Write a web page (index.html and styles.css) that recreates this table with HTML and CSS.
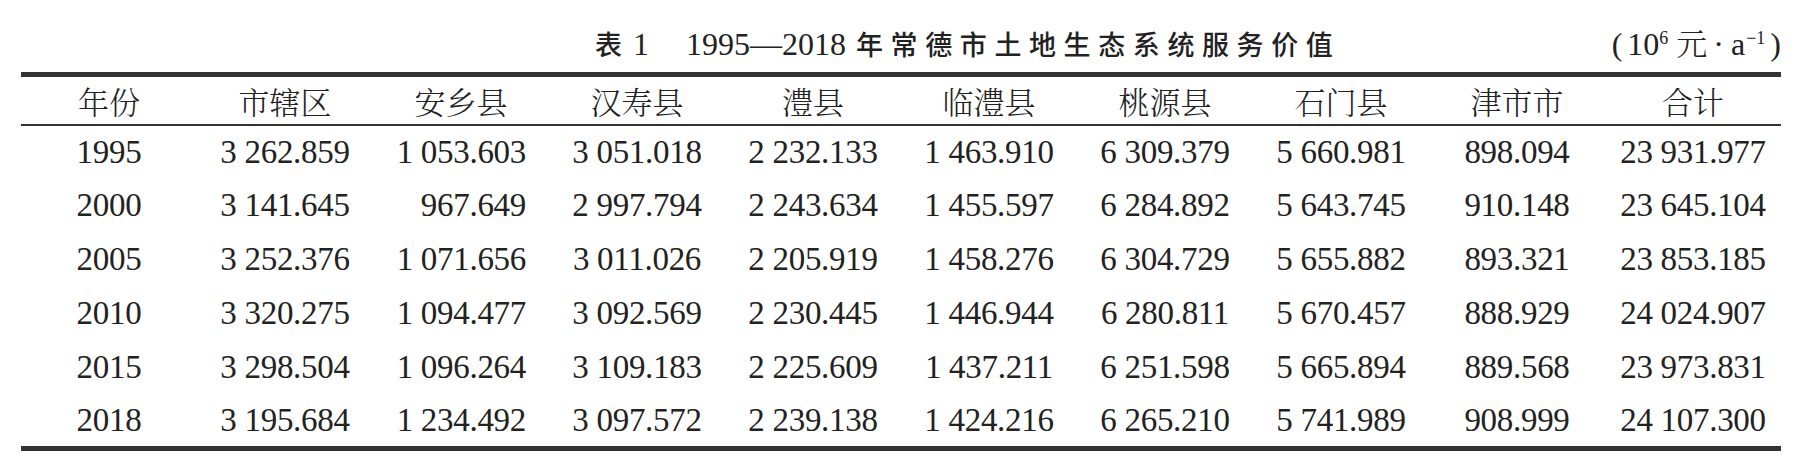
FILE: index.html
```html
<!DOCTYPE html>
<html lang="zh-CN">
<head>
<meta charset="utf-8">
<title>表1 1995—2018年常德市土地生态系统服务价值</title>
<link rel="stylesheet" href="styles.css">
</head>
<body>
<div class="page">
  <div class="caption">
    <div class="title">
      <span class="t-label">表</span><span class="t-num">1</span><span class="t-range">1995—2018</span><span class="t-text">年常德市土地生态系统服务价值</span>
    </div>
    <div class="unit">
      <span class="paren">(</span><span class="u-num">10</span><span class="sup">6</span><span class="u-cjk">元</span><span class="u-dot">·</span><span class="u-a">a</span><span class="sup sup-neg">−1</span><span class="paren paren-r">)</span>
    </div>
  </div>
  <table class="data">
    <colgroup>
      <col class="c"><col class="c"><col class="c"><col class="c"><col class="c">
      <col class="c"><col class="c"><col class="c"><col class="c"><col class="c">
    </colgroup>
    <thead>
      <tr>
        <th>年份</th><th>市辖区</th><th>安乡县</th><th>汉寿县</th><th>澧县</th>
        <th>临澧县</th><th>桃源县</th><th>石门县</th><th>津市市</th><th>合计</th>
      </tr>
    </thead>
    <tbody>
      <tr><td>1995</td><td>3 262.859</td><td class="r">1 053.603</td><td>3 051.018</td><td>2 232.133</td><td>1 463.910</td><td>6 309.379</td><td>5 660.981</td><td>898.094</td><td>23 931.977</td></tr>
      <tr><td>2000</td><td>3 141.645</td><td class="r">967.649</td><td>2 997.794</td><td>2 243.634</td><td>1 455.597</td><td>6 284.892</td><td>5 643.745</td><td>910.148</td><td>23 645.104</td></tr>
      <tr><td>2005</td><td>3 252.376</td><td class="r">1 071.656</td><td>3 011.026</td><td>2 205.919</td><td>1 458.276</td><td>6 304.729</td><td>5 655.882</td><td>893.321</td><td>23 853.185</td></tr>
      <tr><td>2010</td><td>3 320.275</td><td class="r">1 094.477</td><td>3 092.569</td><td>2 230.445</td><td>1 446.944</td><td>6 280.811</td><td>5 670.457</td><td>888.929</td><td>24 024.907</td></tr>
      <tr><td>2015</td><td>3 298.504</td><td class="r">1 096.264</td><td>3 109.183</td><td>2 225.609</td><td>1 437.211</td><td>6 251.598</td><td>5 665.894</td><td>889.568</td><td>23 973.831</td></tr>
      <tr><td>2018</td><td>3 195.684</td><td class="r">1 234.492</td><td>3 097.572</td><td>2 239.138</td><td>1 424.216</td><td>6 265.210</td><td>5 741.989</td><td>908.999</td><td>24 107.300</td></tr>
    </tbody>
  </table>
</div>
</body>
</html>
```

FILE: styles.css
```css
html, body {
  margin: 0;
  padding: 0;
  background: #ffffff;
}

body {
  color: #222222;
  font-family: "Liberation Serif", "Times New Roman", "Noto Sans CJK SC", serif;
}

.page {
  width: 1760px;
  padding-left: 21px;
}

/* ---------- caption ---------- */
.caption {
  display: flex;
  align-items: baseline;
  height: 72px;
  box-sizing: border-box;
  padding-top: 26px;
  line-height: 32px;
}

.title {
  margin-left: 574px;
  white-space: nowrap;
  display: flex;
  align-items: baseline;
}

.t-label,
.t-text {
  font-family: "Noto Sans CJK SC", "Noto Sans", sans-serif;
  font-weight: 500;
  font-size: 27px;
}

.t-num,
.t-range {
  font-family: "Liberation Serif", serif;
  font-size: 32px;
}

.t-num {
  margin-left: 11px;
}

.t-range {
  margin-left: 37px;
}

.t-text {
  margin-left: 10px;
  letter-spacing: 7.6px;
}

.unit {
  margin-left: auto;
  display: flex;
  align-items: baseline;
  white-space: nowrap;
  font-size: 32px;
}

.paren {
  font-size: 32px;
}

.u-num {
  margin-left: 5px;
}

.sup {
  font-size: 18px;
  line-height: 0;
  position: relative;
  top: -11px;
}

.u-cjk {
  font-family: "Noto Serif CJK SC", "Noto Sans CJK SC", sans-serif;
  font-weight: 300;
  font-size: 31px;
  margin-left: 8px;
}

.u-dot {
  margin-left: 6px;
}

.u-a {
  margin-left: 7px;
}

.sup-neg {
  margin-left: 1px;
}

.paren-r {
  margin-left: 5px;
}

/* ---------- table ---------- */
.data {
  width: 1760px;
  table-layout: fixed;
  border-collapse: collapse;
  border-top: 5px solid #333333;
  border-bottom: 5px solid #333333;
}

.data col.c {
  width: 176px;
}

.data th,
.data td {
  padding: 0;
  text-align: center;
  vertical-align: middle;
  white-space: nowrap;
}

.data thead tr {
  height: 50px;
  border-bottom: 2px solid #333333;
}

.data th {
  font-family: "Noto Serif CJK SC", "Noto Sans CJK SC", sans-serif;
  font-weight: 300;
  font-size: 31px;
  line-height: 1;
}

.data tbody tr {
  height: 54px;
}

.data td {
  font-size: 33px;
  letter-spacing: -0.3px;
  line-height: 1;
}

.data td.r {
  text-align: right;
  padding-right: 23px;
}
```
